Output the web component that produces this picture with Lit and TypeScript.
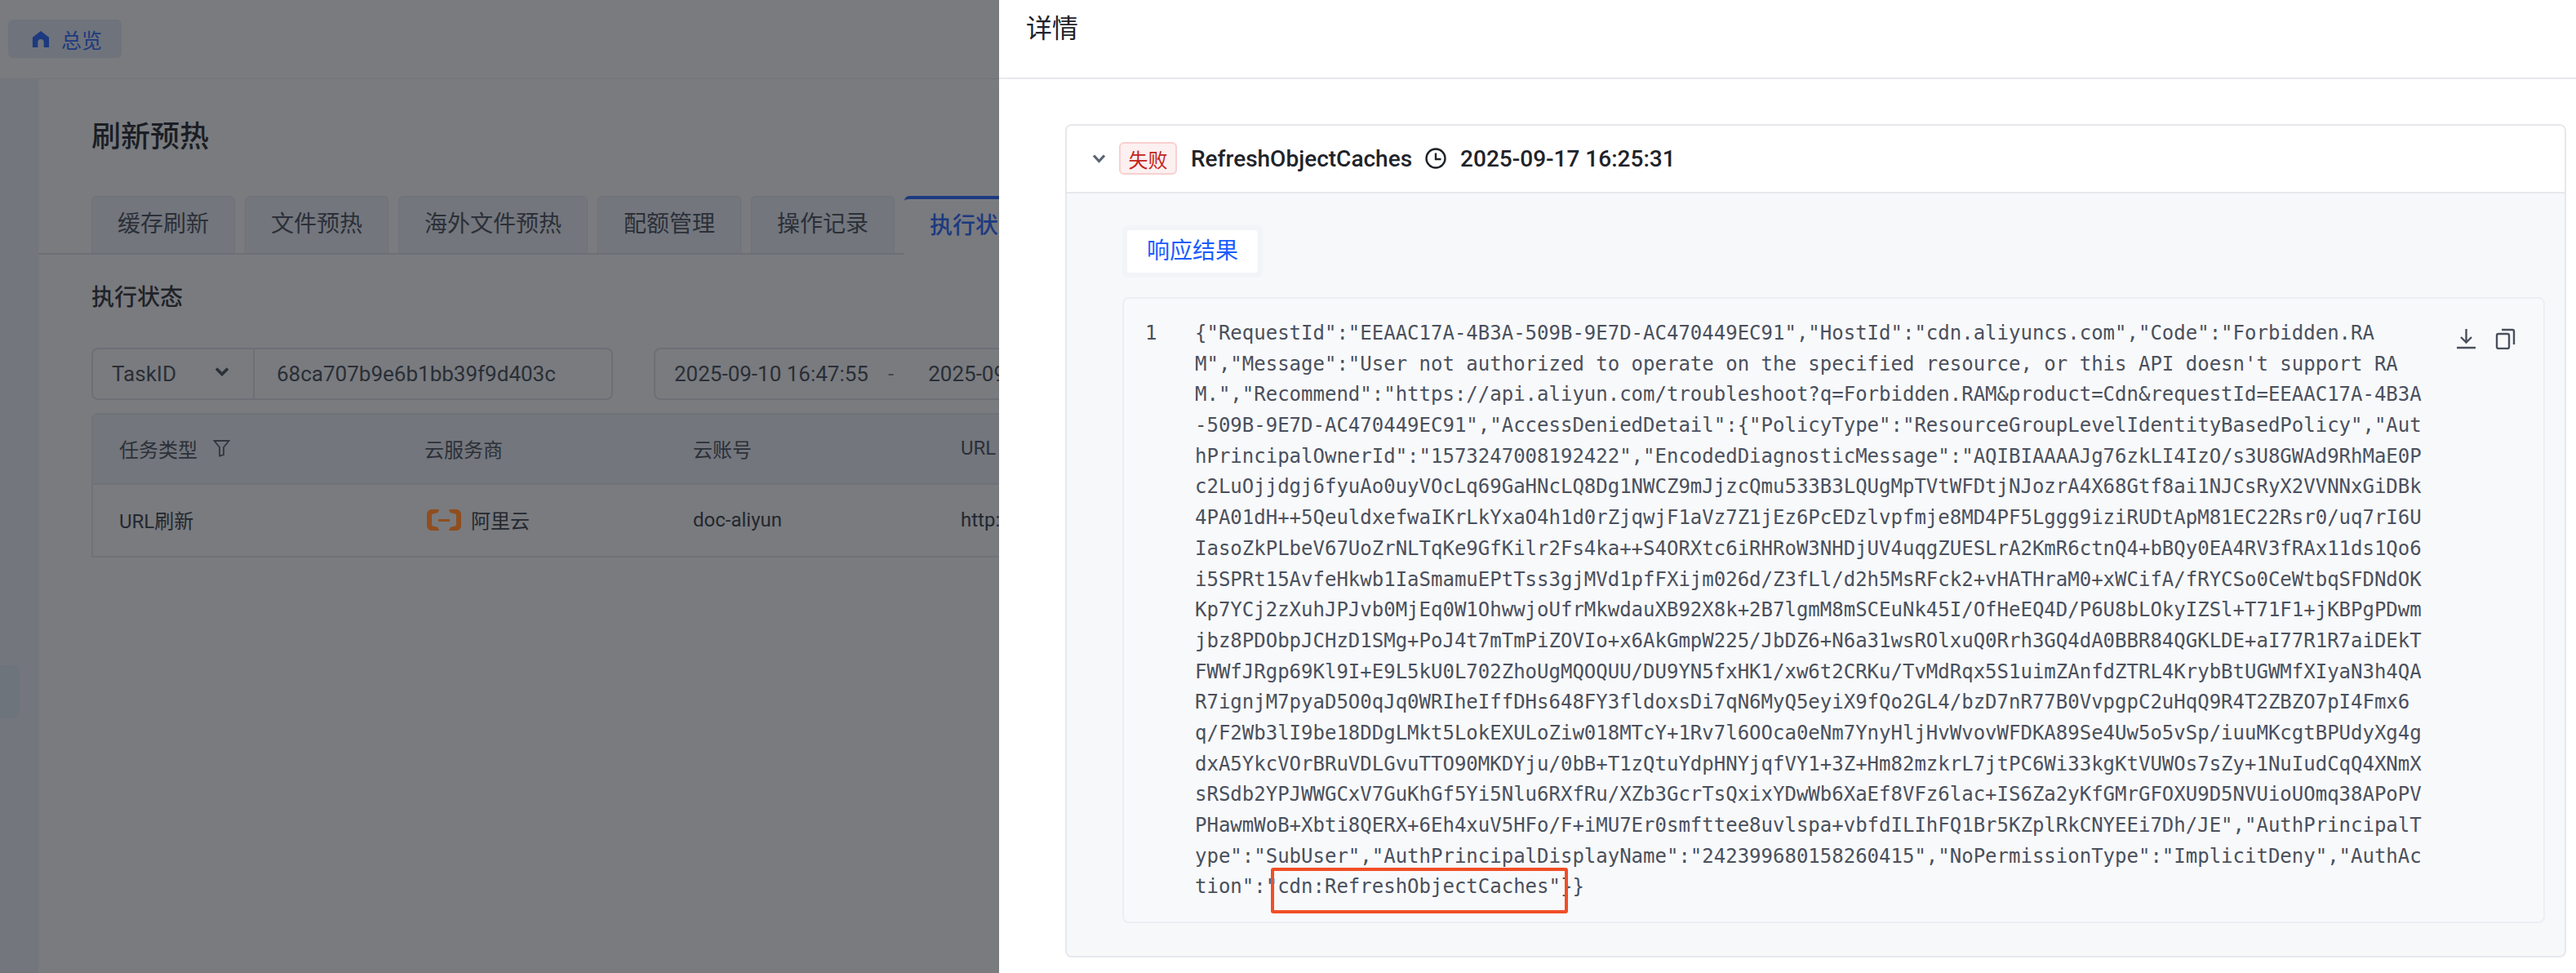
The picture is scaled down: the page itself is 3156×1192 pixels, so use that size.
import { LitElement, html, css } from "lit";
import { customElement } from "lit/decorators.js";

const LINES = [
  `{"RequestId":"EEAAC17A-4B3A-509B-9E7D-AC470449EC91","HostId":"cdn.aliyuncs.com","Code":"Forbidden.RA`,
  `M","Message":"User not authorized to operate on the specified resource, or this API doesn't support RA`,
  `M.","Recommend":"https://api.aliyun.com/troubleshoot?q=Forbidden.RAM&product=Cdn&requestId=EEAAC17A-4B3A`,
  `-509B-9E7D-AC470449EC91","AccessDeniedDetail":{"PolicyType":"ResourceGroupLevelIdentityBasedPolicy","Aut`,
  `hPrincipalOwnerId":"1573247008192422","EncodedDiagnosticMessage":"AQIBIAAAAJg76zkLI4IzO/s3U8GWAd9RhMaE0P`,
  `c2LuOjjdgj6fyuAo0uyVOcLq69GaHNcLQ8Dg1NWCZ9mJjzcQmu533B3LQUgMpTVtWFDtjNJozrA4X68Gtf8ai1NJCsRyX2VVNNxGiDBk`,
  `4PA01dH++5QeuldxefwaIKrLkYxaO4h1d0rZjqwjF1aVz7Z1jEz6PcEDzlvpfmje8MD4PF5Lggg9iziRUDtApM81EC22Rsr0/uq7rI6U`,
  `IasoZkPLbeV67UoZrNLTqKe9GfKilr2Fs4ka++S4ORXtc6iRHRoW3NHDjUV4uqgZUESLrA2KmR6ctnQ4+bBQy0EA4RV3fRAx11ds1Qo6`,
  `i5SPRt15AvfeHkwb1IaSmamuEPtTss3gjMVd1pfFXijm026d/Z3fLl/d2h5MsRFck2+vHATHraM0+xWCifA/fRYCSo0CeWtbqSFDNdOK`,
  `Kp7YCj2zXuhJPJvb0MjEq0W1OhwwjoUfrMkwdauXB92X8k+2B7lgmM8mSCEuNk45I/OfHeEQ4D/P6U8bLOkyIZSl+T71F1+jKBPgPDwm`,
  `jbz8PDObpJCHzD1SMg+PoJ4t7mTmPiZOVIo+x6AkGmpW225/JbDZ6+N6a31wsROlxuQ0Rrh3GQ4dA0BBR84QGKLDE+aI77R1R7aiDEkT`,
  `FWWfJRgp69Kl9I+E9L5kU0L702ZhoUgMQOQUU/DU9YN5fxHK1/xw6t2CRKu/TvMdRqx5S1uimZAnfdZTRL4KrybBtUGWMfXIyaN3h4QA`,
  `R7ignjM7pyaD5O0qJq0WRIheIffDHs648FY3fldoxsDi7qN6MyQ5eyiX9fQo2GL4/bzD7nR77B0VvpgpC2uHqQ9R4T2ZBZO7pI4Fmx6`,
  `q/F2Wb3lI9be18DDgLMkt5LokEXULoZiw018MTcY+1Rv7l6OOca0eNm7YnyHljHvWvovWFDKA89Se4Uw5o5vSp/iuuMKcgtBPUdyXg4g`,
  `dxA5YkcVOrBRuVDLGvuTTO90MKDYju/0bB+T1zQtuYdpHNYjqfVY1+3Z+Hm82mzkrL7jtPC6Wi33kgKtVUWOs7sZy+1NuIudCqQ4XNmX`,
  `sRSdb2YPJWWGCxV7GuKhGf5Yi5Nlu6RXfRu/XZb3GcrTsQxixYDwWb6XaEf8VFz6lac+IS6Za2yKfGMrGFOXU9D5NVUioUOmq38APoPV`,
  `PHawmWoB+Xbti8QERX+6Eh4xuV5HFo/F+iMU7Er0smfttee8uvlspa+vbfdILIhFQ1Br5KZplRkCNYEEi7Dh/JE","AuthPrincipalT`,
  `ype":"SubUser","AuthPrincipalDisplayName":"242399680158260415","NoPermissionType":"ImplicitDeny","AuthAc`,
  `tion":"cdn:RefreshObjectCaches"}}`,
];

const TABS = ["缓存刷新", "文件预热", "海外文件预热", "配额管理", "操作记录"];

@customElement("app-root")
export class AppRoot extends LitElement {
  static styles = css`
    :host {
      display: block;
      width: 3156px;
      height: 1192px;
      position: relative;
      overflow: hidden;
      background: #fff;
      font-family: Roboto, "Noto Sans CJK SC", sans-serif;
      color: #1f2329;
    }
    .page { display: flex; flex-direction: column; height: 1192px; background: #fff; }
    .topbar {
      height: 96px;
      flex: none;
      border-bottom: 1px solid #e6e8ec;
      display: flex;
      align-items: center;
      padding-left: 10px;
      box-sizing: content-box;
    }
    .home {
      width: 139px;
      height: 47px;
      margin-top: -1px;
      border-radius: 6px;
      background: #e6ebf5;
      display: flex;
      align-items: center;
      gap: 14px;
      padding-left: 29px;
      box-sizing: border-box;
      color: #1a5cff;
      font-size: 25px;
    }
    .home svg { width: 22px; height: 22px; flex: none; }
    .body { flex: 1; display: flex; min-height: 0; }
    .side { width: 47px; flex: none; background: #f1f3f8; padding-top: 718px; box-sizing: border-box; }
    .side-item { width: 24px; height: 65px; background: #e4edf6; border-radius: 0 8px 8px 0; }
    .main { flex: 1; min-width: 0; display: flex; flex-direction: column; }
    .title {
      font-size: 36px;
      font-weight: 500;
      line-height: 50px;
      margin: 46px 0 0 65px;
      color: #14171c;
    }
    .tabs {
      display: flex;
      gap: 12px;
      height: 70px;
      margin-top: 47px;
      padding-left: 65px;
      border-bottom: 2px solid #dfe2e8;
      box-sizing: content-box;
    }
    .tab {
      padding: 0 31px;
      font-size: 28px;
      line-height: 68px;
      background: #f0f2f7;
      border: 1px solid #e4e7ee;
      border-bottom: none;
      border-radius: 6px 6px 0 0;
      color: #3e4450;
      box-sizing: border-box;
      white-space: nowrap;
    }
    .tab.on {
      background: #fff;
      color: #1a5cff;
      font-weight: 500;
      border: none;
      border-top: 4px solid #1a5cff;
      height: 72px;
      line-height: 66px;
    }
    .sec {
      font-size: 28px;
      font-weight: 500;
      line-height: 40px;
      margin: 33px 0 0 65px;
    }
    .filter { display: flex; margin: 41px 0 0 65px; height: 64px; font-size: 26px; color: #3a3f4a; }
    .sel {
      width: 200px;
      border: 2px solid #dfe2e8;
      border-radius: 8px 0 0 8px;
      display: flex;
      align-items: center;
      justify-content: space-between;
      padding: 0 29px 0 23px;
      box-sizing: border-box;
    }
    .sel svg { width: 18px; height: 12px; margin-top: -6px; }
    .inp {
      width: 439px;
      border: 2px solid #dfe2e8;
      border-left: none;
      border-radius: 0 8px 8px 0;
      display: flex;
      align-items: center;
      padding-left: 27px;
      box-sizing: border-box;
    }
    .range {
      margin-left: 50px;
      flex: 1;
      border: 2px solid #dfe2e8;
      border-radius: 8px;
      display: flex;
      align-items: center;
      padding-left: 23px;
      box-sizing: border-box;
      white-space: nowrap;
    }
    .range .dash { margin: 0 42px 0 24px; color: #7a808c; }
    .table { margin: 16px 0 0 65px; border: 2px solid #e6e8ec; border-radius: 8px 0 0 0; font-size: 24px; color: #2a2e36; }
    .tr { display: grid; grid-template-columns: 374px 329px 328px 1fr; padding: 0 0 2px 32px; align-items: center; box-sizing: border-box; }
    .thead { height: 86px; background: #f0f2f7; border-bottom: 2px solid #e4e7ee; color: #3e4450; }
    .tbody { height: 87px; }
    .th { display: flex; align-items: center; gap: 19px; white-space: nowrap; }
    .th svg { width: 21px; height: 24px; }
    .cloud { display: flex; align-items: center; gap: 12px; padding-left: 3px; }
    .cloud svg { width: 42px; height: 26px; position: relative; z-index: 1; }
    .overlay { position: absolute; inset: 0; background: rgba(31, 35, 41, 0.6); }
    .drawer {
      position: absolute;
      left: 1224px;
      top: 0;
      right: 0;
      bottom: 0;
      background: #fff;
      display: flex;
      flex-direction: column;
    }
    .d-head {
      height: 95px;
      flex: none;
      border-bottom: 2px solid #e8e9ee;
      font-size: 32px;
      font-weight: 400;
      line-height: 70px;
      padding-left: 33px;
      color: #1f2329;
      box-sizing: content-box;
    }
    .card {
      margin: 55px 12px 0 81px;
      height: 1021px;
      border: 2px solid #e6e8ec;
      border-radius: 8px;
      box-sizing: border-box;
      background: #f7f8fa;
      display: flex;
      flex-direction: column;
      overflow: hidden;
    }
    .c-head {
      height: 80px;
      flex: none;
      background: #fff;
      border-bottom: 2px solid #e6e8ec;
      display: flex;
      align-items: center;
      box-sizing: content-box;
      padding: 0 0 1px 31px;
      font-size: 28px;
      font-weight: 500;
      color: #1f2329;
    }
    .chev { width: 17px; height: 12px; flex: none; margin-right: 16px; }
    .tag {
      width: 71px;
      height: 40px;
      border: 2px solid #f8d0d0;
      background: #fdf0f0;
      color: #c4231c;
      border-radius: 6px;
      font-size: 24px;
      font-weight: 400;
      display: flex;
      align-items: center;
      justify-content: center;
      box-sizing: border-box;
      margin-right: 17px;
    }
    .clock { width: 26px; height: 26px; margin: 0 17px 0 16px; flex: none; }
    .c-body { flex: 1; padding: 39px 24px 0 68px; min-height: 0; }
    .rtabs {
      display: inline-flex;
      padding: 6px;
      background: #f3f4f7;
      border-radius: 6px;
      height: 64px;
      box-sizing: border-box;
    }
    .rtab {
      width: 160px;
      background: #fff;
      border-radius: 4px;
      color: #1a5cff;
      font-size: 28px;
      text-align: center;
      line-height: 52px;
    }
    .code {
      position: relative;
      margin-top: 24px;
      height: 767px;
      border: 2px solid #eceef3;
      border-radius: 8px;
      box-sizing: border-box;
      background: #f8f9fb;
      display: flex;
      padding-top: 24px;
      font-family: "DejaVu Sans Mono", monospace;
      font-size: 24px;
      line-height: 37.7px;
      color: #4a505c;
    }
    .ln { width: 87px; flex: none; padding-left: 26px; box-sizing: border-box; }
    .line { white-space: pre; height: 37.7px; }
    .actions { position: absolute; top: 36px; right: 34px; display: flex; gap: 23px; }
    .actions svg { width: 25px; height: 26px; display: block; }
    .mark {
      position: absolute;
      left: 180px;
      top: 697px;
      width: 364px;
      height: 56px;
      border: 4px solid #f24e26;
      border-radius: 3px;
      box-sizing: border-box;
    }
  `;

  render() {
    return html`
      <div class="page">
        <div class="topbar">
          <div class="home">
            <svg viewBox="0 0 24 24"><path fill="#1a5cff" d="M12 1 23 9.500V23h-7v-7a4 4 0 0 0-8 0v7H1V9.500z"/></svg>
            <span>总览</span>
          </div>
        </div>
        <div class="body">
          <div class="side"><div class="side-item"></div></div>
          <div class="main">
            <div class="title">刷新预热</div>
            <div class="tabs">
              ${TABS.map((t) => html`<div class="tab">${t}</div>`)}
              <div class="tab on">执行状态</div>
            </div>
            <div class="sec">执行状态</div>
            <div class="filter">
              <div class="sel">
                <span>TaskID</span>
                <svg viewBox="0 0 18 12"><path d="M2 2.500l7 7 7-7" fill="none" stroke="#3e4450" stroke-width="3.600"/></svg>
              </div>
              <div class="inp">68ca707b9e6b1bb39f9d403c</div>
              <div class="range">
                <span>2025-09-10 16:47:55</span><span class="dash">-</span><span>2025-09-17 16:47:55</span>
              </div>
            </div>
            <div class="table">
              <div class="tr thead">
                <div class="th">任务类型
                  <svg viewBox="0 0 21 24"><path d="M1.500 3h18l-6.500 8v9l-5 1.500V11z" fill="none" stroke="#4a505c" stroke-width="1.800"/></svg>
                </div>
                <div class="th">云服务商</div>
                <div class="th">云账号</div>
                <div class="th">URL</div>
              </div>
              <div class="tr tbody">
                <div>URL刷新</div>
                <div class="cloud">
                  <svg viewBox="0 0 42 26">
                    <path fill="#8f4e1e" d="M15 0H6C2.700 0 0 2.700 0 6v14c0 3.300 2.700 6 6 6h9l-1.500-4-6-1.500c-.8-.2-1.500-1-1.500-2V7.500c0-1 .7-1.800 1.500-2l6-1.500zM27 0h9c3.300 0 6 2.700 6 6v14c0 3.300-2.700 6-6 6h-9l1.500-4 6-1.500c.8-.2 1.500-1 1.500-2V7.500c0-1-.7-1.800-1.500-2l-6-1.500z"/>
                    <rect x="14" y="12" width="14" height="3" fill="#8f4e1e"/>
                  </svg>
                  <span>阿里云</span>
                </div>
                <div>doc-aliyun</div>
                <div>http://</div>
              </div>
            </div>
          </div>
        </div>
      </div>
      <div class="overlay"></div>
      <div class="drawer">
        <div class="d-head">详情</div>
        <div class="card">
          <div class="c-head">
            <svg class="chev" viewBox="0 0 17 12"><path d="M2 2.500l6.500 7 6.500-7" fill="none" stroke="#5b6472" stroke-width="3.200"/></svg>
            <div class="tag">失败</div>
            <span>RefreshObjectCaches</span>
            <svg class="clock" viewBox="0 0 26 26"><circle cx="13" cy="13" r="11.500" fill="none" stroke="#1f2329" stroke-width="2.400"/><path d="M13 6.500V14h6.500" fill="none" stroke="#1f2329" stroke-width="2.400"/></svg>
            <span>2025-09-17 16:25:31</span>
          </div>
          <div class="c-body">
            <div class="rtabs"><div class="rtab">响应结果</div></div>
            <div class="code">
              <div class="ln">1</div>
              <div>${LINES.map((l) => html`<div class="line">${l}</div>`)}</div>
              <div class="actions">
                <svg viewBox="0 0 25 26"><path d="M12.500 1v16M6 11l6.500 6.500L19 11M1 24h23" fill="none" stroke="#4a505c" stroke-width="2.400"/></svg>
                <svg viewBox="0 0 25 26"><rect x="2" y="7" width="15" height="18" rx="2" fill="none" stroke="#4a505c" stroke-width="2.400"/><path d="M8 2h13a2 2 0 0 1 2 2v16" fill="none" stroke="#4a505c" stroke-width="2.400"/></svg>
              </div>
              <div class="mark"></div>
            </div>
          </div>
        </div>
      </div>
    `;
  }
}
